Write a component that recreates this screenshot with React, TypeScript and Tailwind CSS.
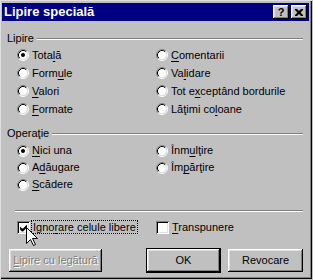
import React from "react";

const raised =
  "shadow-[inset_-1px_-1px_#000,inset_1px_1px_#fff,inset_-2px_-2px_#808080,inset_2px_2px_#dfdfdf]";

function Radio({ checked }: { checked?: boolean }) {
  return (
    <svg width="12" height="12" viewBox="0 0 12 12" className="shrink-0">
      <circle cx="6" cy="6" r="4.5" fill="#fff" />
      <path d="M2.11 9.89A5.5 5.5 0 0 1 9.89 2.11" stroke="#808080" fill="none" />
      <path d="M9.89 2.11A5.5 5.5 0 0 1 2.11 9.89" stroke="#fff" fill="none" />
      <path d="M2.82 9.18A4.5 4.5 0 0 1 9.18 2.82" stroke="#000" fill="none" />
      <path d="M9.18 2.82A4.5 4.5 0 0 1 2.82 9.18" stroke="#dfdfdf" fill="none" />
      {checked && <circle cx="6" cy="6" r="2" fill="#000" />}
    </svg>
  );
}

function Check({ checked }: { checked?: boolean }) {
  return (
    <div className="w-[13px] h-[13px] shrink-0 bg-white shadow-[inset_1px_1px_#808080,inset_-1px_-1px_#fff,inset_2px_2px_#000,inset_-2px_-2px_#dfdfdf] flex items-center justify-center">
      {checked && (
        <svg width="9" height="9" viewBox="0 0 9 9">
          <path d="M1 3.5v3l2 2h1l4-4v-3l-4 4h-1z" fill="#000" />
        </svg>
      )}
    </div>
  );
}

function Option({ checked, children }: { checked?: boolean; children: React.ReactNode }) {
  return (
    <div className="flex items-center gap-[3px] h-full">
      <Radio checked={checked} />
      <span className="leading-[13px]">{children}</span>
    </div>
  );
}

function GroupHead({ label, className }: { label: string; className?: string }) {
  return (
    <div className={"flex items-center h-[13px] pr-[6px] " + (className ?? "")}>
      <span className="leading-[13px] mr-[3px]">{label}</span>
      <div className="flex-1 h-[2px] border-t border-t-[#808080] border-b border-b-white" />
    </div>
  );
}

const U = ({ children }: { children: React.ReactNode }) => (
  <span className="underline underline-offset-[2px]">{children}</span>
);

export default function App() {
  return (
    <div className="w-[313px] h-[280px] bg-[#c0c0c0] [font-family:'Liberation_Sans',Arial,sans-serif] text-[11px] text-black overflow-hidden">
      <div className="relative w-[312px] h-[279px] pt-[3px] pl-[2px] pr-[3px] shadow-[inset_1px_1px_#dfdfdf,inset_-1px_-1px_#000,inset_-2px_-2px_#808080]">
        {/* title bar */}
        <div className="h-[18px] bg-[#000080] flex items-center justify-between pl-[2px] pr-[2px]">
          <span className="text-white font-bold text-[13px] leading-[14px]">Lipire specială</span>
          <div className="flex gap-[2px]">
            <div className={"w-[16px] h-[14px] bg-[#c0c0c0] flex items-center justify-center font-bold text-[11px] leading-none " + raised}>
              ?
            </div>
            <div className={"w-[16px] h-[14px] bg-[#c0c0c0] flex items-center justify-center " + raised}>
              <svg width="8" height="7" viewBox="0 0 8 7">
                <path d="M0 0h2l2 2 2-2h2v1l-2.5 2.5L8 6v1H6L4 5 2 7H0V6l2.5-2.5L0 1z" fill="#000" />
              </svg>
            </div>
          </div>
        </div>

        <div className="pl-[5px]">
          <GroupHead label="Lipire" className="mt-[11px]" />
          <div className="grid grid-cols-[139px_1fr] auto-rows-[18px] pl-[10px] mt-[1px]">
            <Option checked>Tota<U>l</U>ă</Option>
            <Option><U>C</U>omentarii</Option>
            <Option>Form<U>u</U>le</Option>
            <Option>Va<U>l</U>idare</Option>
            <Option><U>V</U>alori</Option>
            <Option>Tot e<U>x</U>ceptând bordurile</Option>
            <Option><U>F</U>ormate</Option>
            <Option>Lăţimi co<U>l</U>oane</Option>
          </div>

          <GroupHead label="Operaţie" className="mt-[9px]" />
          <div className="grid grid-cols-[139px_1fr] auto-rows-[17px] pl-[10px] mt-[2px]">
            <Option checked><U>N</U>ici una</Option>
            <Option>Înm<U>u</U>lţire</Option>
            <Option>A<U>d</U>ăugare</Option>
            <Option>Îm<U>p</U>ărţire</Option>
            <Option><U>S</U>cădere</Option>
          </div>

          <div className="mt-[17px] ml-[8px] mr-[6px] h-[2px] border-t border-t-[#808080] border-b border-b-white" />

          <div className="grid grid-cols-[139px_1fr] h-[14px] pl-[10px] mt-[8px]">
            <div className="flex items-center gap-[2px]">
              <Check checked />
              <span className="leading-[12px] px-[1px] outline outline-1 outline-dotted outline-black">
                Igno<U>r</U>are celule libere
              </span>
            </div>
            <div className="flex items-center gap-[3px]">
              <Check />
              <span className="leading-[12px]"><U>T</U>ranspunere</span>
            </div>
          </div>

          <div className="flex items-center mt-[14px] ml-[2px]">
            <div className={"w-[93px] h-[23px] flex items-center justify-center text-[#808080] [text-shadow:1px_1px_#fff] " + raised}>
              <span><U>L</U>ipire cu legătură</span>
            </div>
            <div className="ml-[44px] border border-black">
              <div className={"w-[73px] h-[23px] flex items-center justify-center " + raised}>OK</div>
            </div>
            <div className={"ml-[7px] w-[75px] h-[23px] flex items-center justify-center " + raised}>Revocare</div>
          </div>
        </div>

        {/* mouse pointer */}
        <svg className="absolute left-[26px] top-[227px]" width="13" height="20" viewBox="0 0 13 20">
          <path d="M0.5 0.5V16.5L4.5 12.5L7.5 18.5L9.5 17.5L6.5 11.5H11.5Z" fill="#fff" stroke="#000" />
        </svg>
      </div>
    </div>
  );
}
